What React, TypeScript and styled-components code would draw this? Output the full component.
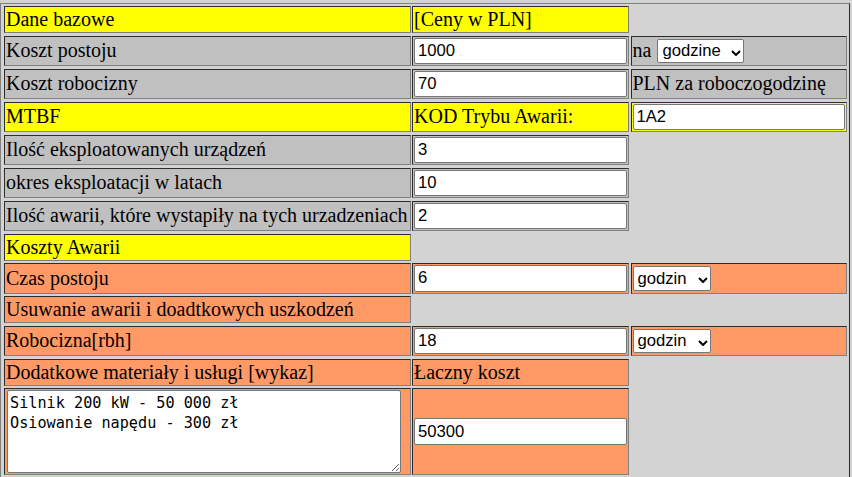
import React from "react";
import styled, { createGlobalStyle } from "styled-components";

const YELLOW = "#ffff00";
const SILVER = "#c0c0c0";
const ORANGE = "#ff9966";

const GlobalStyle = createGlobalStyle`
  html, body {
    margin: 0;
    padding: 0;
    background: #d3d3d3;
  }
`;

const Page = styled.div`
  padding-top: 3px;
`;

// table-like sheet: three columns, cells sit on a grey ground
const Sheet = styled.div`
  display: grid;
  grid-template-columns: 406.5px 217px 216.5px;
  column-gap: 1.5px;
  row-gap: 2.5px;
  padding: 2px 1.5px 2.5px 3px;
  border: 1px outset gray;
  width: max-content;
  background: #d3d3d3;
`;

const Cell = styled.div<{ $bg: string; $col: number }>`
  grid-column: ${(p) => p.$col};
  background: ${(p) => p.$bg};
  border: 1px inset gray;
  padding: 1px;
  display: flex;
  align-items: center;
  gap: 6px;
  min-width: 0;
  font: 20px/23px "Liberation Serif", "Times New Roman", serif;
  color: #000;
  white-space: nowrap;
`;

const Field = styled.input`
  box-sizing: border-box;
  width: 100%;
  height: 26.5px;
  margin: 0;
  padding: 1px 3px;
  border: 1px solid #767676;
  border-radius: 2px;
  background: #fff;
  color: #000;
  font: 16.67px "Liberation Sans", Arial, sans-serif;
`;

const SelectWrap = styled.span`
  position: relative;
  display: inline-flex;
`;

const Select = styled.select`
  appearance: none;
  box-sizing: border-box;
  height: 24.5px;
  margin: 0;
  padding: 0 22px 0 4px;
  border: 1px solid #767676;
  border-radius: 2px;
  background: #fff;
  color: #000;
  font: 16.67px "Liberation Sans", Arial, sans-serif;
`;

const Chevron = styled.svg`
  position: absolute;
  right: 3px;
  top: 11px;
  width: 10px;
  height: 6px;
  pointer-events: none;
`;

const Notes = styled.textarea`
  box-sizing: border-box;
  width: 394px;
  height: 83px;
  margin: 0 0 0 1px;
  padding: 2px;
  border: 1px solid #767676;
  border-radius: 2px;
  background: #fff;
  color: #000;
  font: 15.2px/20px "DejaVu Sans Mono", "Liberation Mono", monospace;
  resize: both;
`;

const UnitSelect = ({ options }: { options: string[] }) => (
  <SelectWrap>
    <Select defaultValue={options[0]}>
      {options.map((o) => (
        <option key={o}>{o}</option>
      ))}
    </Select>
    <Chevron viewBox="0 0 10 6">
      <path d="M1 1 L5 5 L9 1" fill="none" stroke="#000" strokeWidth="2" />
    </Chevron>
  </SelectWrap>
);

const App = () => {
  return (
    <Page>
      <GlobalStyle />
      <Sheet>
        {/* Dane bazowe */}
        <Cell $bg={YELLOW} $col={1}>Dane bazowe</Cell>
        <Cell $bg={YELLOW} $col={2}>[Ceny w PLN]</Cell>

        <Cell $bg={SILVER} $col={1}>Koszt postoju</Cell>
        <Cell $bg={SILVER} $col={2}>
          <Field defaultValue="1000" />
        </Cell>
        <Cell $bg={SILVER} $col={3}>
          na
          <UnitSelect options={["godzine", "dzień", "tydzień"]} />
        </Cell>

        <Cell $bg={SILVER} $col={1}>Koszt robocizny</Cell>
        <Cell $bg={SILVER} $col={2}>
          <Field defaultValue="70" />
        </Cell>
        <Cell $bg={SILVER} $col={3}>PLN za roboczogodzinę</Cell>

        {/* MTBF */}
        <Cell $bg={YELLOW} $col={1}>MTBF</Cell>
        <Cell $bg={YELLOW} $col={2}>KOD Trybu Awarii:</Cell>
        <Cell $bg={YELLOW} $col={3}>
          <Field defaultValue="1A2" />
        </Cell>

        <Cell $bg={SILVER} $col={1}>Ilość eksploatowanych urządzeń</Cell>
        <Cell $bg={SILVER} $col={2}>
          <Field defaultValue="3" />
        </Cell>

        <Cell $bg={SILVER} $col={1}>okres eksploatacji w latach</Cell>
        <Cell $bg={SILVER} $col={2}>
          <Field defaultValue="10" />
        </Cell>

        <Cell $bg={SILVER} $col={1}>Ilość awarii, które wystapiły na tych urzadzeniach</Cell>
        <Cell $bg={SILVER} $col={2}>
          <Field defaultValue="2" />
        </Cell>

        {/* Koszty Awarii */}
        <Cell $bg={YELLOW} $col={1}>Koszty Awarii</Cell>

        <Cell $bg={ORANGE} $col={1}>Czas postoju</Cell>
        <Cell $bg={ORANGE} $col={2}>
          <Field defaultValue="6" />
        </Cell>
        <Cell $bg={ORANGE} $col={3}>
          <UnitSelect options={["godzin", "dni"]} />
        </Cell>

        <Cell $bg={ORANGE} $col={1}>Usuwanie awarii i doadtkowych uszkodzeń</Cell>

        <Cell $bg={ORANGE} $col={1}>Robocizna[rbh]</Cell>
        <Cell $bg={ORANGE} $col={2}>
          <Field defaultValue="18" />
        </Cell>
        <Cell $bg={ORANGE} $col={3}>
          <UnitSelect options={["godzin", "dni"]} />
        </Cell>

        <Cell $bg={ORANGE} $col={1}>Dodatkowe materiały i usługi [wykaz]</Cell>
        <Cell $bg={ORANGE} $col={2}>Łaczny koszt</Cell>

        <Cell $bg={ORANGE} $col={1}>
          <Notes defaultValue={"Silnik 200 kW - 50 000 zł\nOsiowanie napędu - 300 zł"} />
        </Cell>
        <Cell $bg={ORANGE} $col={2}>
          <Field defaultValue="50300" />
        </Cell>
      </Sheet>
    </Page>
  );
};

export default App;
